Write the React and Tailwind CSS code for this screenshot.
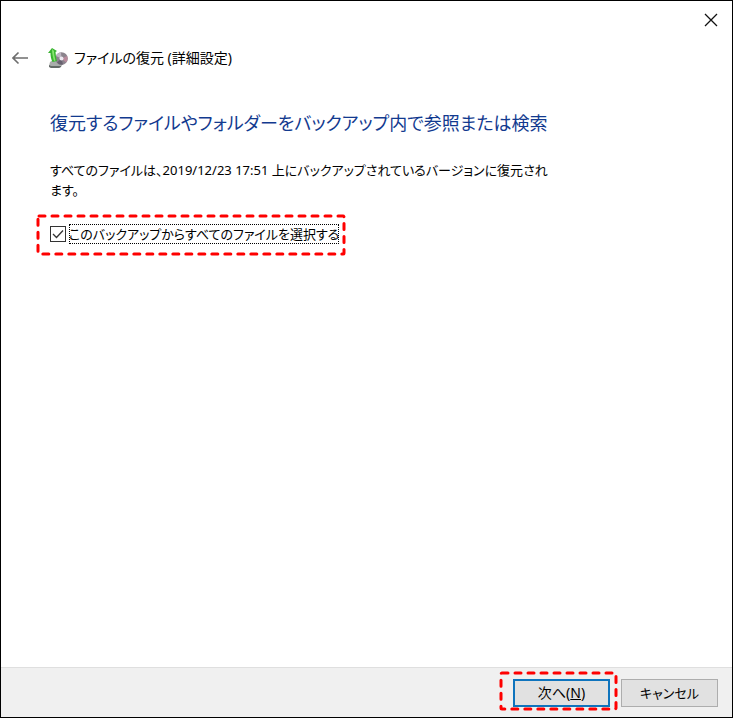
import React, { useState } from "react";

function BackupIcon() {
  return (
    <svg width="20" height="21" viewBox="0 0 20 21" aria-hidden="true">
      {/* drive */}
      <path d="M2 14 L5 12 H12 L14 18 L11 20 H3 L1 18 Z" fill="#a9adab" />
      <path d="M1 17 L3 18 H13 V19 L11 20 H3 L1 19 Z" fill="#646a68" />
      {/* disc */}
      <circle cx="13.5" cy="10.5" r="6.3" fill="#8b838c" />
      <path d="M13.5 10.5 L8 8 A6 6 0 0 1 13 4.5 Z" fill="#bdb6c2" />
      <path d="M13.5 10.5 L19 8 A6 6 0 0 1 18 14.5 Z" fill="#b98a9c" />
      <path d="M13.5 10.5 L15 16.5 A6 6 0 0 1 9 14.5 Z" fill="#686270" />
      <circle cx="13.5" cy="10.5" r="2" fill="#ece8f0" />
      {/* arrow */}
      <path
        d="M0 5 L4 0 L9 3 L7.5 4 C8 8 8 10 9 13 L4.5 14 C3 11 2.5 8 2.5 5 Z"
        fill="#38b32f"
      />
      <path d="M4 1 L6 3 C6 7 7 10 7.5 12.5 L6 13 C5 9 4 6 4 1 Z" fill="#86e470" />
    </svg>
  );
}

function Highlight({ className }) {
  return (
    <svg
      className={`absolute pointer-events-none overflow-visible ${className}`}
      aria-hidden="true"
    >
      <rect
        width="100%"
        height="100%"
        rx="1"
        fill="none"
        stroke="#fe0000"
        strokeWidth="3"
        strokeLinecap="round"
        strokeDasharray="6 7"
      />
    </svg>
  );
}

function App() {
  const [selectAll, setSelectAll] = useState(true);

  return (
    <div className="min-h-screen flex flex-col bg-white border border-black text-black text-[13px] leading-5 font-['Noto_Sans','Noto_Sans_CJK_JP',sans-serif] [font-feature-settings:'palt']">
      {/* title bar */}
      <div className="flex justify-end h-[38px]">
        <button aria-label="閉じる" className="w-[42px] flex items-center justify-center">
          <svg width="14" height="14" viewBox="0 0 14 14">
            <path d="M1 1 L13 13 M13 1 L1 13" stroke="#111" strokeWidth="1.3" />
          </svg>
        </button>
      </div>

      {/* header */}
      <header className="flex items-center h-[38px] pl-[11px]">
        <button aria-label="戻る" className="w-9">
          <svg width="17" height="14" viewBox="0 0 17 14">
            <path
              d="M1 7 H16 M6.5 1.5 L1 7 L6.5 12.5"
              fill="none"
              stroke="#6e6e6e"
              strokeWidth="1.6"
            />
          </svg>
        </button>
        <BackupIcon />
        <span className="ml-1.5 text-[14px]">ファイルの復元 (詳細設定)</span>
      </header>

      {/* content */}
      <main className="flex-1 px-[49px] pt-8">
        <h1 className="text-[18px] leading-7 text-[#123a8f]">
          復元するファイルやフォルダーをバックアップ内で参照または検索
        </h1>
        <p className="mt-[23px] max-w-[508px]">
          すべてのファイルは、2019/12/23 17:51 上にバックアップされているバージョンに復元されます。
        </p>
        <div className="relative mt-6 w-fit">
          <label className="flex items-center gap-[3px]">
            <span className="relative size-4">
              <input
                type="checkbox"
                checked={selectAll}
                onChange={(e) => setSelectAll(e.target.checked)}
                className="peer block size-4 appearance-none border border-[#333] bg-white"
              />
              <svg
                viewBox="0 0 16 16"
                className="absolute inset-0 hidden size-4 peer-checked:block pointer-events-none"
              >
                <path
                  d="M3 8 L6.5 11.5 L13 4.5"
                  fill="none"
                  stroke="#333"
                  strokeWidth="1.3"
                />
              </svg>
            </span>
            <span className="outline-1 outline-dotted outline-black -outline-offset-1">
              このバックアップからすべてのファイルを選択する
            </span>
          </label>
          <Highlight className="-left-3 -top-2 w-[306px] h-[38px]" />
        </div>
      </main>

      {/* footer */}
      <footer className="flex justify-end gap-[11px] bg-[#f0f0f0] border-t border-[#dfdfdf] pt-[11px] pb-2.5 pr-3.5">
        <div className="relative">
          <button className="block w-[97px] h-7 bg-[#e1e1e1] border-2 border-[#0f74bd] text-[14px]">
            次へ(<span className="underline">N</span>)
          </button>
          <Highlight className="-left-3 -top-1.5 w-[115px] h-9" />
        </div>
        <button className="w-[97px] h-7 bg-[#e1e1e1] border border-[#adadad]">
          キャンセル
        </button>
      </footer>
    </div>
  );
}

export default App;
